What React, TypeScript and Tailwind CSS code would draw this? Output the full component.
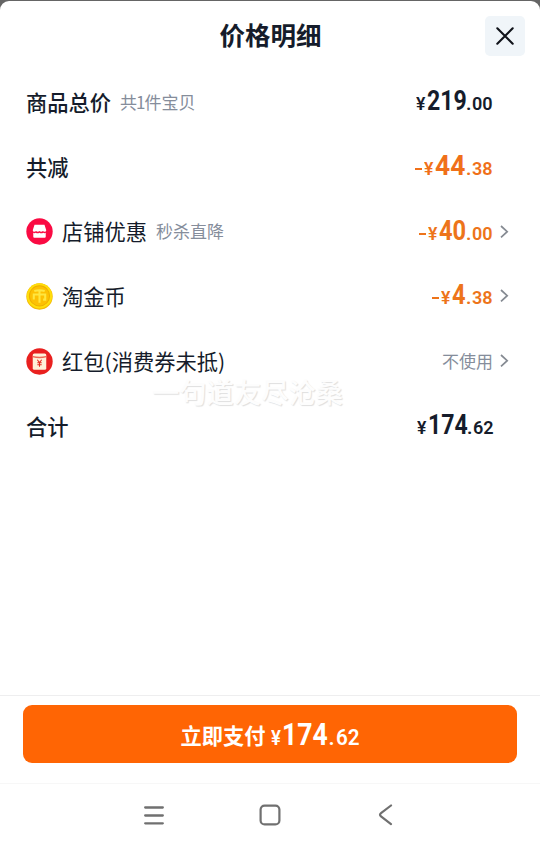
import React from "react";

type AmountProps = {
  whole: string;
  cents: string;
  minus?: boolean;
  wholeBox: string;
  wholeScale: string;
};

function Amount({ whole, cents, minus, wholeBox, wholeScale }: AmountProps) {
  return (
    <span className="flex items-baseline whitespace-nowrap pt-px font-['Roboto','Liberation_Sans',sans-serif] font-bold leading-[30px]">
      {minus && <span className="mb-[14px] mr-[2px] h-[2px] w-[7px] self-end bg-current" />}
      <span className="w-[11px] text-[19px] font-semibold">
        <span className="inline-block origin-left scale-x-[0.93]">¥</span>
      </span>
      <span className={`${wholeBox} text-[27.500px]`}>
        <span className={`inline-block origin-left ${wholeScale}`}>{whole}</span>
      </span>
      <span className="w-[6px] text-[19px] font-semibold">.</span>
      <span className="w-[21px] text-[19px] font-semibold">
        <span className="inline-block origin-left scale-x-[0.95]">{cents}</span>
      </span>
    </span>
  );
}

function ButtonAmount() {
  return (
    <span className="flex items-baseline whitespace-nowrap pt-[4px] font-['Roboto','Liberation_Sans',sans-serif] font-bold leading-[30px]">
      <span className="w-[11px] text-[20px] font-semibold">
        <span className="inline-block origin-left scale-x-[0.93]">¥</span>
      </span>
      <span className="w-[46px] text-[30.500px]">
        <span className="inline-block origin-left scale-x-[0.87]">174</span>
      </span>
      <span className="w-[8px] text-[21.500px] font-semibold">.</span>
      <span className="w-[24px] text-[21.500px] font-semibold">
        <span className="inline-block origin-left scale-x-[0.96]">62</span>
      </span>
    </span>
  );
}

function Chevron() {
  return (
    <svg className="ml-[7px] h-[14px] w-[10px]" viewBox="0 0 10 14" fill="none" stroke="#858a92" strokeWidth="1.7">
      <path d="M1 1 7.200 6.700 1 12.400" />
    </svg>
  );
}

function ShopIcon() {
  return (
    <svg className="mr-[9px] size-[27px]" viewBox="0 0 26 26">
      <circle cx="13" cy="13" r="12.700" fill="#fa0b43" />
      <path d="M8.200 6.500h9.600l1.700 5.200q0 1.500-1.600 1.500-1 0-1.600-.8-.7.800-1.700.8t-1.600-.8q-.7.800-1.700.8t-1.600-.8q-.7.800-1.700.8-1.500 0-1.500-1.500z" fill="#fff" />
      <path d="M7 14.300q1.200.6 2.400-.1 1.700 1 3.600 0 1.800 1 3.600 0 1.200.7 2.400.1V18q0 1-1 1H8q-1 0-1-1z" fill="#fff" />
    </svg>
  );
}

function CoinIcon() {
  return (
    <svg className="mr-[9px] size-[27px]" viewBox="0 0 26 26" fill="none">
      <circle cx="13" cy="13" r="12.700" fill="#f2b705" />
      <circle cx="13" cy="12.400" r="12.200" fill="#ffdd0b" />
      <circle cx="13" cy="12.400" r="9.700" fill="#fdc103" stroke="#efae00" strokeWidth="1" />
      <path d="M8 7.600q5-1.400 10 0M7.500 16v-5h11v5h-2M13 8v11" stroke="#ffe640" strokeWidth="2" />
    </svg>
  );
}

function EnvelopeIcon() {
  return (
    <svg className="mr-[9px] size-[27px]" viewBox="0 0 26 26" fill="none">
      <circle cx="13" cy="13" r="12.700" fill="#e9201f" />
      <rect x="6.500" y="5.200" width="13" height="15.800" rx="1.500" fill="#fff1d9" />
      <path d="M6.500 8.300q6.500 1.600 13 0" stroke="#ee6652" strokeWidth="1.300" />
      <path d="m10.900 11.300 2.100 2.700 2.100-2.700M13 14v4M10.900 14.300h4.200M10.900 16.100h4.200" stroke="#e52b20" strokeWidth="1" />
    </svg>
  );
}

function Row({ children }: { children: React.ReactNode }) {
  return <div className="flex h-[64.750px] items-center justify-between pl-[26px]">{children}</div>;
}

const heading = "pb-px text-[21.250px] font-medium leading-[30px]";
const label = "pb-px text-[21.250px] leading-[30px]";
const note = "pb-px text-[17px] leading-[24px] text-[#858d9b]";

export default function App() {
  return (
    <div className="h-[851px] w-[540px] overflow-hidden bg-[#656565] pt-px font-['Noto_Sans_CJK_SC',sans-serif] text-[#151c2b]">
      <main className="relative flex h-[850px] flex-col rounded-t-[9px] bg-white">
        <header className="grid h-[69px] grid-cols-[1fr_auto_1fr] items-center">
          <h1 className="col-start-2 pb-[4px] pl-px text-[25.500px] font-bold leading-[36px]">价格明细</h1>
          <button aria-label="关闭" className="mr-[15px] flex size-10 items-center justify-center justify-self-end rounded-[5px] bg-[#f0f5f9]">
            <svg className="size-[18px]" viewBox="0 0 18 18" fill="none" stroke="#10131a" strokeWidth="2.100" strokeLinecap="round">
              <path d="m1.300 1.300 15.400 15.400M16.700 1.300 1.300 16.700" />
            </svg>
          </button>
        </header>

        <section>
          <Row>
            <div className="flex items-center">
              <span className={heading}>商品总价</span>
              <span className={`${note} ml-[9px]`}>共<span className="-ml-px tracking-[-1px]">1</span>件宝贝</span>
            </div>
            <div className="mr-[47px]"><Amount whole="219" cents="00" wholeBox="w-[39px]" wholeScale="scale-x-[0.84]" /></div>
          </Row>
          <Row>
            <span className={heading}>共减</span>
            <div className="mr-[47px] text-[#f07019]"><Amount minus whole="44" cents="38" wholeBox="w-[31px]" wholeScale="scale-x-[0.96]" /></div>
          </Row>
          <Row>
            <div className="flex items-center"><ShopIcon /><span className={label}>店铺优惠</span><span className={`${note} ml-[9px]`}>秒杀直降</span></div>
            <div className="mr-[30px] flex items-center text-[#ed741a]"><Amount minus whole="40" cents="00" wholeBox="w-[27px]" wholeScale="scale-x-[0.86]" /><Chevron /></div>
          </Row>
          <Row>
            <div className="flex items-center"><CoinIcon /><span className={label}>淘金币</span></div>
            <div className="mr-[30px] flex items-center pb-[2px] text-[#ed741a]"><Amount minus whole="4" cents="38" wholeBox="w-[14px]" wholeScale="scale-x-[0.86]" /><Chevron /></div>
          </Row>
          <Row>
            <div className="flex items-center"><EnvelopeIcon /><span className={label}>红包(消费券未抵)</span></div>
            <div className="mr-[30px] flex items-center"><span className={note}>不使用</span><Chevron /></div>
          </Row>
          <Row>
            <span className={heading}>合计</span>
            <div className="mr-[46px]"><Amount whole="174" cents="62" wholeBox="w-[39px]" wholeScale="scale-x-[0.84]" /></div>
          </Row>
        </section>

        <span className="absolute left-[152px] top-[370px] text-[27.300px] font-medium leading-[40px] text-[#fdfdfd] [text-shadow:1px_1px_1px_#dfdfdf]">一句道友尽沧桑</span>

        <footer className="mt-auto border-t border-[#eeeeef] px-[23px] pt-[9px]">
          <button className="flex h-[58px] w-full items-center justify-center rounded-[9px] bg-[#ff6504] text-white">
            <span className="mr-[5px] pt-[2px] text-[21.250px] font-bold leading-[30px]">立即支付</span>
            <ButtonAmount />
          </button>
        </footer>

        <nav className="mt-[20px] flex h-[68px] shrink-0 items-start border-t border-[#f7f7f7] pl-[144px] pt-[20px] text-[#707070]">
          <svg className="mt-px size-[20px]" viewBox="0 0 20 20" stroke="currentColor" strokeWidth="2.300" strokeLinecap="round"><path d="M1.200 2.500h17.600M1.200 10.500h17.600M1.200 18.300h17.600" /></svg>
          <svg className="ml-[95px] size-[22px]" viewBox="0 0 22 22" fill="none" stroke="currentColor" strokeWidth="2.200"><rect x="1.600" y="1.600" width="18.800" height="18.800" rx="4" /></svg>
          <svg className="ml-[97px] h-[22px] w-[15px]" viewBox="0 0 15 22" fill="none" stroke="currentColor" strokeWidth="2.200" strokeLinecap="round"><path d="M13 1.500 3 9.200q-2 1.600 0 3.200l10 7.700" /></svg>
        </nav>
      </main>
    </div>
  );
}
